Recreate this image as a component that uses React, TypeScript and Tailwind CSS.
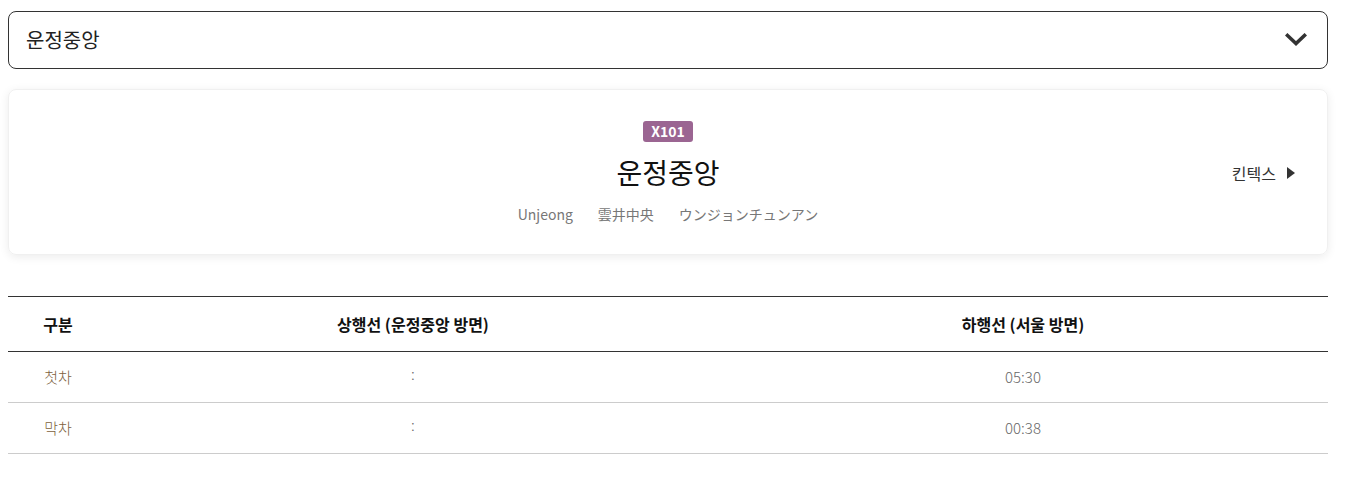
import React from "react";

export default function App() {
  const font = { fontFamily: '"Noto Sans CJK KR", "Noto Sans", sans-serif' };
  const rows = [
    { label: "첫차", up: ":", down: "05:30" },
    { label: "막차", up: ":", down: "00:38" },
  ];
  return (
    <div className="bg-white w-[1347px] h-[480px] pt-[11px]" style={font}>
      <div className="ml-2 w-[1320px]">
        <div className="h-[58px] border border-[#333] rounded-lg flex items-center justify-between pl-[17px] pr-[20px]">
          <span className="text-[20px] text-[#222]">운정중앙</span>
          <svg width="22" height="14" viewBox="0 0 22 14">
            <polyline points="2.5,2.5 11,10.5 19.5,2.5" fill="none" stroke="#333" strokeWidth="3.6" strokeLinecap="square" />
          </svg>
        </div>

        <div className="mt-5 h-[166px] rounded-lg border border-[#f0f0f0] shadow-[0_2px_10px_rgba(0,0,0,0.08)] relative flex flex-col items-center pt-[31px]">
          <span className="h-[21px] px-[8px] rounded-[3px] bg-[#9b6592] text-white text-[14px] font-bold leading-[21px]">X101</span>
          <div className="mt-[10px] text-[28px] leading-[40px] text-[#111]">운정중앙</div>
          <div className="mt-[12px] flex gap-[25px] text-[14px] text-[#777] leading-[20px]">
            <span>Unjeong</span>
            <span>雲井中央</span>
            <span>ウンジョンチュンアン</span>
          </div>
          <div className="absolute right-[32px] top-[71px] flex items-center gap-[11px] text-[16px] text-[#333]">
            <span>킨텍스</span>
            <svg width="8" height="12" viewBox="0 0 8 12">
              <polygon points="0,0 8,6 0,12" fill="#333" />
            </svg>
          </div>
        </div>

        <div className="mt-[41px] border-t border-[#333]">
          <div className="grid grid-cols-[100px_610px_610px] h-[55px] items-center border-b border-[#333] text-[16px] font-bold text-[#111]">
            <div className="text-center">구분</div>
            <div className="text-center">상행선 (운정중앙 방면)</div>
            <div className="text-center">하행선 (서울 방면)</div>
          </div>
          {rows.map((r) => (
            <div key={r.label} className="grid grid-cols-[100px_610px_610px] h-[51px] items-center border-b border-[#ccc] text-[15px] font-light">
              <div className="text-center text-[#7d5f3c]">{r.label}</div>
              <div className="text-center text-[#666] -translate-y-[3px]">{r.up}</div>
              <div className="text-center text-[#666]">{r.down}</div>
            </div>
          ))}
        </div>
      </div>
    </div>
  );
}
